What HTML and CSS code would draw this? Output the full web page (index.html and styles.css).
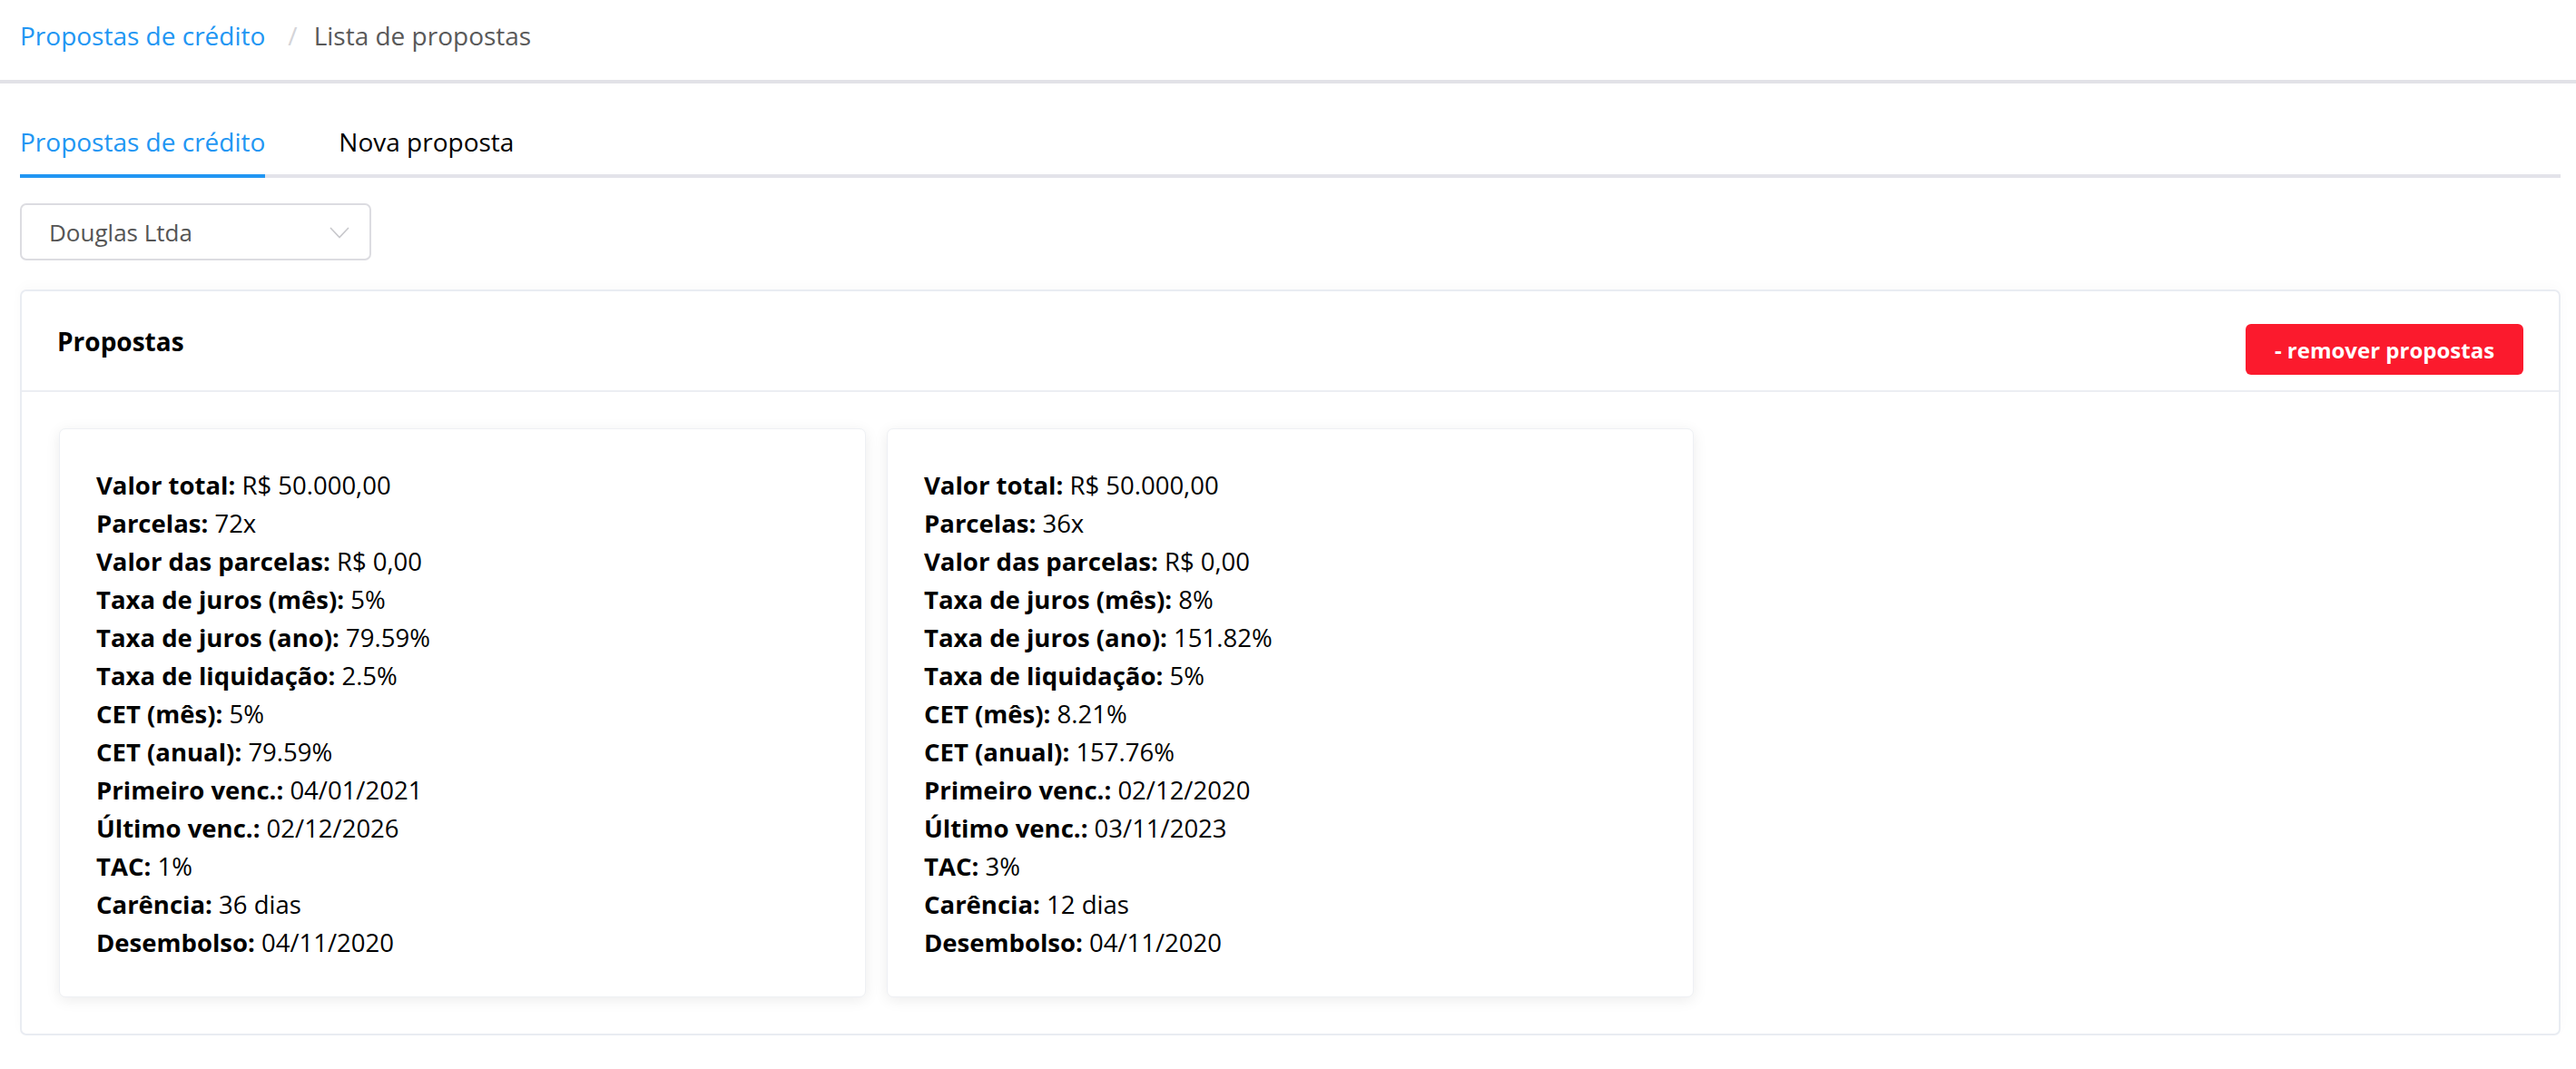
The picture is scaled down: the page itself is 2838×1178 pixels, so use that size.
FILE: index.html
```html
<!DOCTYPE html>
<html lang="pt-BR">
<head>
<meta charset="utf-8">
<title>Lista de propostas</title>
<link rel="stylesheet" href="styles.css">
</head>
<body>
<header class="topbar">
  <nav class="breadcrumb">
    <a class="crumb-link" href="#">Propostas de crédito</a>
    <span class="crumb-sep">/</span>
    <span class="crumb-current">Lista de propostas</span>
  </nav>
</header>
<main class="content">
  <div class="tabs">
    <div class="tab tab-active">Propostas de crédito</div>
    <div class="tab">Nova proposta</div>
  </div>
  <div class="select">
    <span class="select-value">Douglas Ltda</span>
    <svg class="select-arrow" width="22" height="13" viewBox="0 0 22 13"><path d="M1 1 L11 11.5 L21 1" fill="none" stroke="#c8c8cc" stroke-width="1.6"/></svg>
  </div>
  <section class="panel">
    <div class="panel-head">
      <h2 class="panel-title">Propostas</h2>
      <button class="btn-remove">- remover propostas</button>
    </div>
    <div class="panel-body">
      <article class="card">
        <p><b>Valor total:</b> R$ 50.000,00</p>
        <p><b>Parcelas:</b> 72x</p>
        <p><b>Valor das parcelas:</b> R$ 0,00</p>
        <p><b>Taxa de juros (mês):</b> 5%</p>
        <p><b>Taxa de juros (ano):</b> 79.59%</p>
        <p><b>Taxa de liquidação:</b> 2.5%</p>
        <p><b>CET (mês):</b> 5%</p>
        <p><b>CET (anual):</b> 79.59%</p>
        <p><b>Primeiro venc.:</b> 04/01/2021</p>
        <p><b>Último venc.:</b> 02/12/2026</p>
        <p><b>TAC:</b> 1%</p>
        <p><b>Carência:</b> 36 dias</p>
        <p><b>Desembolso:</b> 04/11/2020</p>
      </article>
      <article class="card">
        <p><b>Valor total:</b> R$ 50.000,00</p>
        <p><b>Parcelas:</b> 36x</p>
        <p><b>Valor das parcelas:</b> R$ 0,00</p>
        <p><b>Taxa de juros (mês):</b> 8%</p>
        <p><b>Taxa de juros (ano):</b> 151.82%</p>
        <p><b>Taxa de liquidação:</b> 5%</p>
        <p><b>CET (mês):</b> 8.21%</p>
        <p><b>CET (anual):</b> 157.76%</p>
        <p><b>Primeiro venc.:</b> 02/12/2020</p>
        <p><b>Último venc.:</b> 03/11/2023</p>
        <p><b>TAC:</b> 3%</p>
        <p><b>Carência:</b> 12 dias</p>
        <p><b>Desembolso:</b> 04/11/2020</p>
      </article>
    </div>
  </section>
</main>
</body>
</html>
```
FILE: styles.css
```css
* { box-sizing: border-box; }
html, body { margin: 0; padding: 0; background: #ffffff; }
body {
  font-family: "Open Sans", "Noto Sans", sans-serif;
  color: #000;
}
.topbar {
  height: 92px;
  border-bottom: 4px solid #e2e2e7;
  padding: 19px 0 0 22px;
}
.breadcrumb {
  font-size: 28px;
  line-height: 40px;
  display: flex;
  align-items: center;
}
.crumb-link { color: #2196f3; text-decoration: none; }
.crumb-sep { color: #d4d4d8; margin: 0 18px 0 25px; }
.crumb-current { color: #595959; }

.content { padding: 0 17px 0 22px; }

.tabs {
  display: flex;
  gap: 81px;
  border-bottom: 4px solid #e3e3ea;
  height: 104px;
  align-items: flex-end;
}
.tab {
  font-size: 28px;
  line-height: 40px;
  padding-bottom: 16px;
  margin-bottom: -4px;
  border-bottom: 4px solid transparent;
  color: #000;
}
.tab-active { color: #2196f3; border-bottom-color: #2196f3; }

.select {
  margin-top: 28px;
  width: 387px;
  height: 63px;
  border: 2px solid #dcdce1;
  border-radius: 7px;
  display: flex;
  align-items: center;
  justify-content: space-between;
  padding: 0 22px 0 30px;
}
.select-value { font-size: 26px; color: #555; }
.select-arrow { display: block; margin-top: 2px; }

.panel {
  margin-top: 32px;
  border: 2px solid #e9ecf2;
  border-radius: 7px;
  box-shadow: 0 -4px 14px rgba(0, 0, 0, 0.025);
  background: #fff;
}
.panel-head {
  display: flex;
  justify-content: space-between;
  align-items: flex-start;
  height: 111px;
  padding: 35px 39px 0 39px;
  border-bottom: 2px solid #eceef3;
}
.panel-title {
  margin: 0;
  font-size: 28px;
  font-weight: 700;
  line-height: 40px;
}
.btn-remove {
  font-family: inherit;
  font-size: 24px;
  font-weight: 700;
  color: #fff;
  background: #fb1a2d;
  border: none;
  border-radius: 6px;
  height: 56px;
  width: 306px;
  padding: 0;
  margin-top: 1px;
}
.panel-body {
  display: grid;
  grid-template-columns: repeat(3, 1fr);
  gap: 23px;
  padding: 40px 41px 40px 41px;
  align-items: start;
}
.card {
  border: 1px solid #eef0f4;
  border-radius: 7px;
  box-shadow: 0 3px 16px rgba(0, 0, 0, 0.08);
  padding: 41px 40px 38px 40px;
  background: #fff;
}
.card p {
  margin: 0;
  font-size: 27.5px;
  line-height: 42px;
  white-space: nowrap;
}
.card b { font-weight: 700; }
```
